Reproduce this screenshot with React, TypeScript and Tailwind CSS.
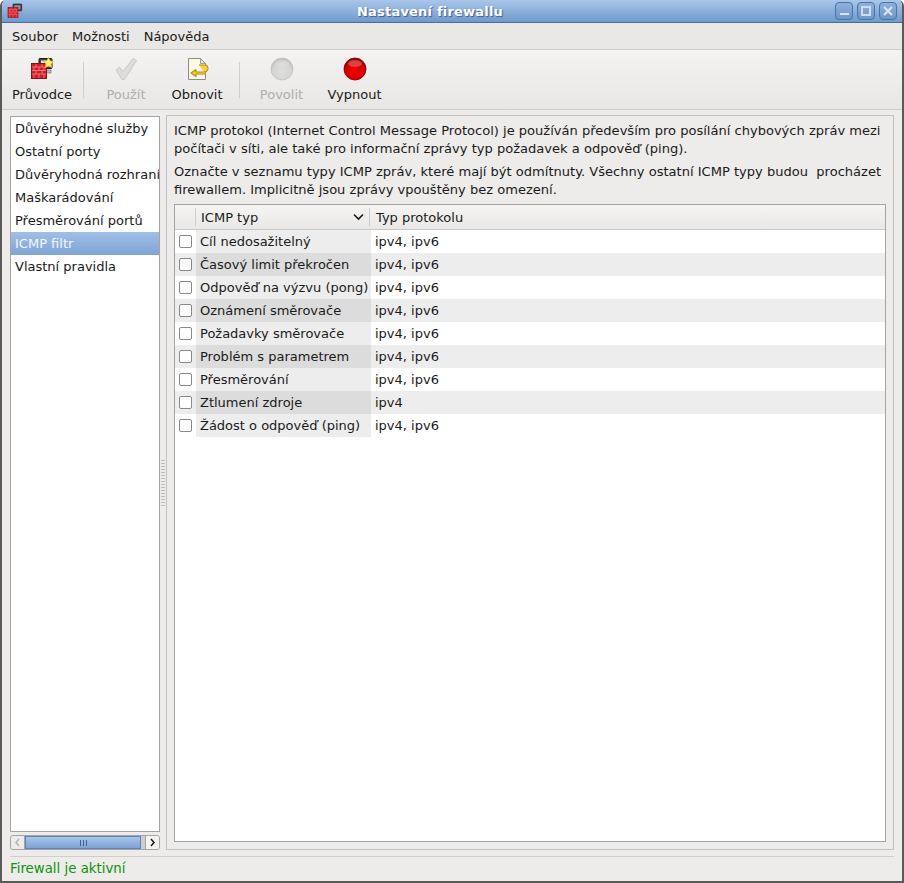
import React from "react";

const font = { fontFamily: '"DejaVu Sans", sans-serif' };

const services = ["Důvěryhodné služby", "Ostatní porty", "Důvěryhodná rozhraní", "Maškarádování", "Přesměrování portů", "ICMP filtr", "Vlastní pravidla"];
const rows: [string, string][] = [
  ["Cíl nedosažitelný", "ipv4, ipv6"],
  ["Časový limit překročen", "ipv4, ipv6"],
  ["Odpověď na výzvu (pong)", "ipv4, ipv6"],
  ["Oznámení směrovače", "ipv4, ipv6"],
  ["Požadavky směrovače", "ipv4, ipv6"],
  ["Problém s parametrem", "ipv4, ipv6"],
  ["Přesměrování", "ipv4, ipv6"],
  ["Ztlumení zdroje", "ipv4"],
  ["Žádost o odpověď (ping)", "ipv4, ipv6"],
];

function FirewallIcon({ size, star }: { size: number; star?: boolean }) {
  return (
    <svg width={size} height={size} viewBox="0 0 24 24">
      <rect x="9" y="1.500" width="13" height="10" rx="1" fill="#444" stroke="#1a1a1a" />
      <rect x="11" y="3.500" width="9" height="6" fill={star ? "#dfe4ea" : "#8f9aa8"} />
      <rect x="16" y="13" width="5" height="3" fill="#bbb" stroke="#666" strokeWidth="0.6" />
      <rect x="1.500" y="6.500" width="15" height="15" fill="#d41a24" stroke="#8f1218" />
      <path d="M2 10h14M2 13.500h14M2 17h14M6 7v3M12 7v3M4 10v3.500M9 10v3.500M14 10v3.500M6 13.500V17M12 13.500V17M4 17v4M9 17v4M14 17v4" stroke="#ef9a98" strokeWidth="0.7" fill="none" />
      {star && <path d="M18.500 0.500l1.600 3.400 3.400.5-2.500 2.500.6 3.500-3.100-1.700-3.100 1.700.6-3.500-2.500-2.500 3.400-.5z" fill="#fff27a" stroke="#e8c020" strokeWidth="0.8" />}
    </svg>
  );
}

function CheckIcon() {
  return (
    <svg width="24" height="24" viewBox="0 0 24 24">
      <path d="M2 13l3.500-3 3.500 4.500L19 1.500l3.500 2L10.500 22.500h-2.500z" fill="#dcdcda" stroke="#c9c9c7" strokeWidth="1" strokeLinejoin="round" />
    </svg>
  );
}

function ReloadIcon() {
  return (
    <svg width="24" height="24" viewBox="0 0 24 24">
      <path d="M3.500 1.500h12l5 5v16h-17z" fill="#fbf9ea" stroke="#8d8d85" />
      <path d="M15.500 1.500v5h5z" fill="#e2e0d4" stroke="#8d8d85" strokeWidth="0.8" />
      <path d="M14 8h5.500a2.600 2.600 0 0 1 0 7H11v-2.500L6 16l5 3.500V17h9" fill="#f5d33f" stroke="#bd8c10" strokeWidth="1.100" strokeLinejoin="round" />
    </svg>
  );
}

function Ball({ on }: { on: boolean }) {
  const id = on ? "ballOn" : "ballOff";
  return (
    <svg width="24" height="24" viewBox="0 0 24 24">
      <defs>
        <radialGradient id={id} cx="50%" cy="62%" r="60%">
          <stop offset="0%" stopColor={on ? "#f00000" : "#dededc"} />
          <stop offset="70%" stopColor={on ? "#d40000" : "#d4d4d2"} />
          <stop offset="100%" stopColor={on ? "#8a0000" : "#bdbdbb"} />
        </radialGradient>
      </defs>
      <circle cx="12" cy="12" r="11" fill={`url(#${id})`} stroke={on ? "#7a0000" : "#c2c2c0"} strokeWidth="0.8" />
      <ellipse cx="12" cy="6.500" rx="7" ry="3.500" fill="#fff" opacity={on ? 0.25 : 0.15} />
    </svg>
  );
}

function ToolButton({ icon, label, disabled, w }: { icon: React.ReactNode; label: string; disabled?: boolean; w: string }) {
  return (
    <div className={`flex shrink-0 flex-col items-center ${w}`}>
      <div className="mt-[7px] h-[24px] w-[24px]">{icon}</div>
      <div className={`mt-[5px] leading-[18px] ${disabled ? "text-[#aeaeac]" : "text-[#1a1a1a]"}`}>{label}</div>
    </div>
  );
}

function WinButton({ children }: { children: React.ReactNode }) {
  return (
    <div className="flex h-[18px] w-[18px] items-center justify-center rounded-[4px] border border-[#4d74a8] bg-gradient-to-b from-[#8fb0da] to-[#6f96c9]">
      {children}
    </div>
  );
}

export default function App() {
  return (
    <div style={font} className="flex h-[883px] w-[904px] flex-col overflow-hidden rounded-t-[6px] border-x-[2px] border-b-[2px] border-[#5a5a58] bg-[#edecea] text-[13px] text-[#1a1a1a]">
      <div className="relative flex h-[23px] shrink-0 items-center justify-center border-b border-[#4a6d9e] bg-gradient-to-b from-[#a9c6e9] to-[#7099cd] pr-[44px] pt-px">
        <div className="absolute left-[5px] top-[3px]"><FirewallIcon size={16} /></div>
        <span className="text-[13px] font-bold tracking-[0.2px] text-white [text-shadow:1px_1px_1px_#3d5f8f]">Nastavení firewallu</span>
        <div className="absolute right-[5px] top-[2px] flex gap-[4px]">
          <WinButton><div className="mt-[6px] h-[2px] w-[9px] bg-[#d8e3f2]" /></WinButton>
          <WinButton><div className="h-[10px] w-[10px] border-[2px] border-[#cfdcee]" /></WinButton>
          <WinButton>
            <svg width="12" height="12" viewBox="0 0 12 12"><path d="M2 2l8 8M10 2l-8 8" stroke="#d8e3f2" strokeWidth="2.200" /></svg>
          </WinButton>
        </div>
      </div>

      <div className="flex h-[26px] shrink-0 items-center gap-[14px] bg-[#e9e8e6] pl-[10px] pt-px leading-none">
        <span>Soubor</span>
        <span>Možnosti</span>
        <span>Nápověda</span>
      </div>

      <div className="flex h-[61px] shrink-0 border-y border-[#cfcecb] bg-gradient-to-b from-[#f4f3f1] to-[#e8e7e5]">
        <ToolButton w="w-[74px] ml-[3px]" label="Průvodce" icon={<FirewallIcon size={24} star />} />
        <div className="ml-[4px] mr-[4px] mt-[12px] h-[36px] w-px bg-[#d0cfcc]" />
        <ToolButton w="w-[76px]" label="Použít" disabled icon={<CheckIcon />} />
        <ToolButton w="w-[66px]" label="Obnovit" icon={<ReloadIcon />} />
        <div className="ml-[9px] mr-[4px] mt-[12px] h-[36px] w-px bg-[#d0cfcc]" />
        <ToolButton w="w-[75px]" label="Povolit" disabled icon={<Ball on={false} />} />
        <ToolButton w="w-[71px]" label="Vypnout" icon={<Ball on />} />
      </div>

      <div className="flex min-h-0 flex-1 pl-[8px] pr-[8px] pt-[5px]">
        <div className="flex w-[150px] shrink-0 flex-col">
          <div className="mt-[1px] flex-1 border border-[#a5a4a2] bg-white">
            {services.map((s, i) => (
              <div key={s} className={`h-[23px] overflow-hidden whitespace-nowrap pl-[4px] leading-[24px] ${i === 5 ? "bg-gradient-to-b from-[#a0bfe6] to-[#7ea4d6] text-[#f2f6fb]" : ""}`}>{s}</div>
            ))}
          </div>
          <div className="mt-[3px] flex h-[15px] shrink-0 overflow-hidden rounded-[3px] border border-[#a5a4a2] bg-[#cfcecc]">
            <div className="flex w-[14px] items-center justify-center border-r border-[#a5a4a2] bg-[#edecea]">
              <svg width="7" height="9" viewBox="0 0 7 9"><path d="M5 1L2 4.500 5 8" fill="none" stroke="#b5b4b2" strokeWidth="1.500" /></svg>
            </div>
            <div className="flex w-[116px] items-center justify-center gap-[2px] border border-[#5f83b5] bg-gradient-to-b from-[#a9c5e8] to-[#7da3d6]">
              <div className="h-[6px] w-px bg-[#3f628f]" /><div className="h-[6px] w-px bg-[#3f628f]" /><div className="h-[6px] w-px bg-[#3f628f]" />
            </div>
            <div className="flex-1" />
            <div className="flex w-[14px] items-center justify-center border-l border-[#a5a4a2] bg-[#f4f3f1]">
              <svg width="7" height="9" viewBox="0 0 7 9"><path d="M2 1l3 3.500L2 8" fill="none" stroke="#1a1a1a" strokeWidth="1.500" /></svg>
            </div>
          </div>
        </div>

        <div className="flex w-[6px] shrink-0 items-center justify-center">
          <div className="h-[46px] w-[4px] bg-[repeating-linear-gradient(to_bottom,#bdbcba_0,#bdbcba_1px,transparent_1px,transparent_3px)]" />
        </div>

        <div className="flex min-w-0 flex-1 flex-col border border-[#c2c1bf] px-[7px] pb-[7px] pt-[6px]">
          <p className="m-0 whitespace-nowrap text-[13.05px] leading-[18px]">ICMP protokol (Internet Control Message Protocol) je používán především pro posílání chybových zpráv mezi<br />počítači v síti, ale také pro informační zprávy typ požadavek a odpověď (ping).</p>
          <p className="m-0 mt-[5px] whitespace-pre text-[13.05px] leading-[18px]">{"Označte v seznamu typy ICMP zpráv, které mají být odmítnuty. Všechny ostatní ICMP typy budou  procházet\nfirewallem. Implicitně jsou zprávy vpouštěny bez omezení."}</p>
          <div className="mt-[5px] min-h-0 flex-1 border border-[#a5a4a2] bg-white">
            <div className="flex h-[25px] border-b border-[#c9c8c6] bg-gradient-to-b from-[#f5f4f2] to-[#e9e8e6] leading-[25px]">
              <div className="flex w-[21px] items-center justify-end"><div className="h-[18px] w-px bg-[#cfcecb]" /></div>
              <div className="flex w-[173px] items-center justify-between pl-[5px] pr-[5px]">
                <span>ICMP typ</span>
                <svg width="11" height="8" viewBox="0 0 11 8"><path d="M1 1.500l4.500 4.500L10 1.500" fill="none" stroke="#1a1a1a" strokeWidth="1.600" /></svg>
              </div>
              <div className="my-[3px] h-[18px] w-px bg-[#cfcecb]" />
              <div className="pl-[6px]">Typ protokolu</div>
            </div>
            {rows.map(([name, proto], i) => (
              <div key={name} className={`flex h-[23px] leading-[23px] ${i % 2 ? "bg-[#ededed]" : "bg-white"}`}>
                <div className="flex w-[21px] items-center justify-center">
                  <div className="h-[13px] w-[13px] rounded-[2px] border border-[#8a8987] bg-white" />
                </div>
                <div className={`w-[175px] overflow-hidden whitespace-nowrap pl-[4px] ${i % 2 ? "bg-[#dcdcdc]" : "bg-[#ededed]"}`}>{name}</div>
                <div className="pl-[4px]">{proto}</div>
              </div>
            ))}
          </div>
        </div>
      </div>

      <div className="mx-[8px] mt-[6px] shrink-0 border-t border-[#cfcecb]" />
      <div className="flex h-[24px] shrink-0 items-center pl-[8px] text-[13.33px] text-[#0d920d]">Firewall je aktivní</div>
    </div>
  );
}
